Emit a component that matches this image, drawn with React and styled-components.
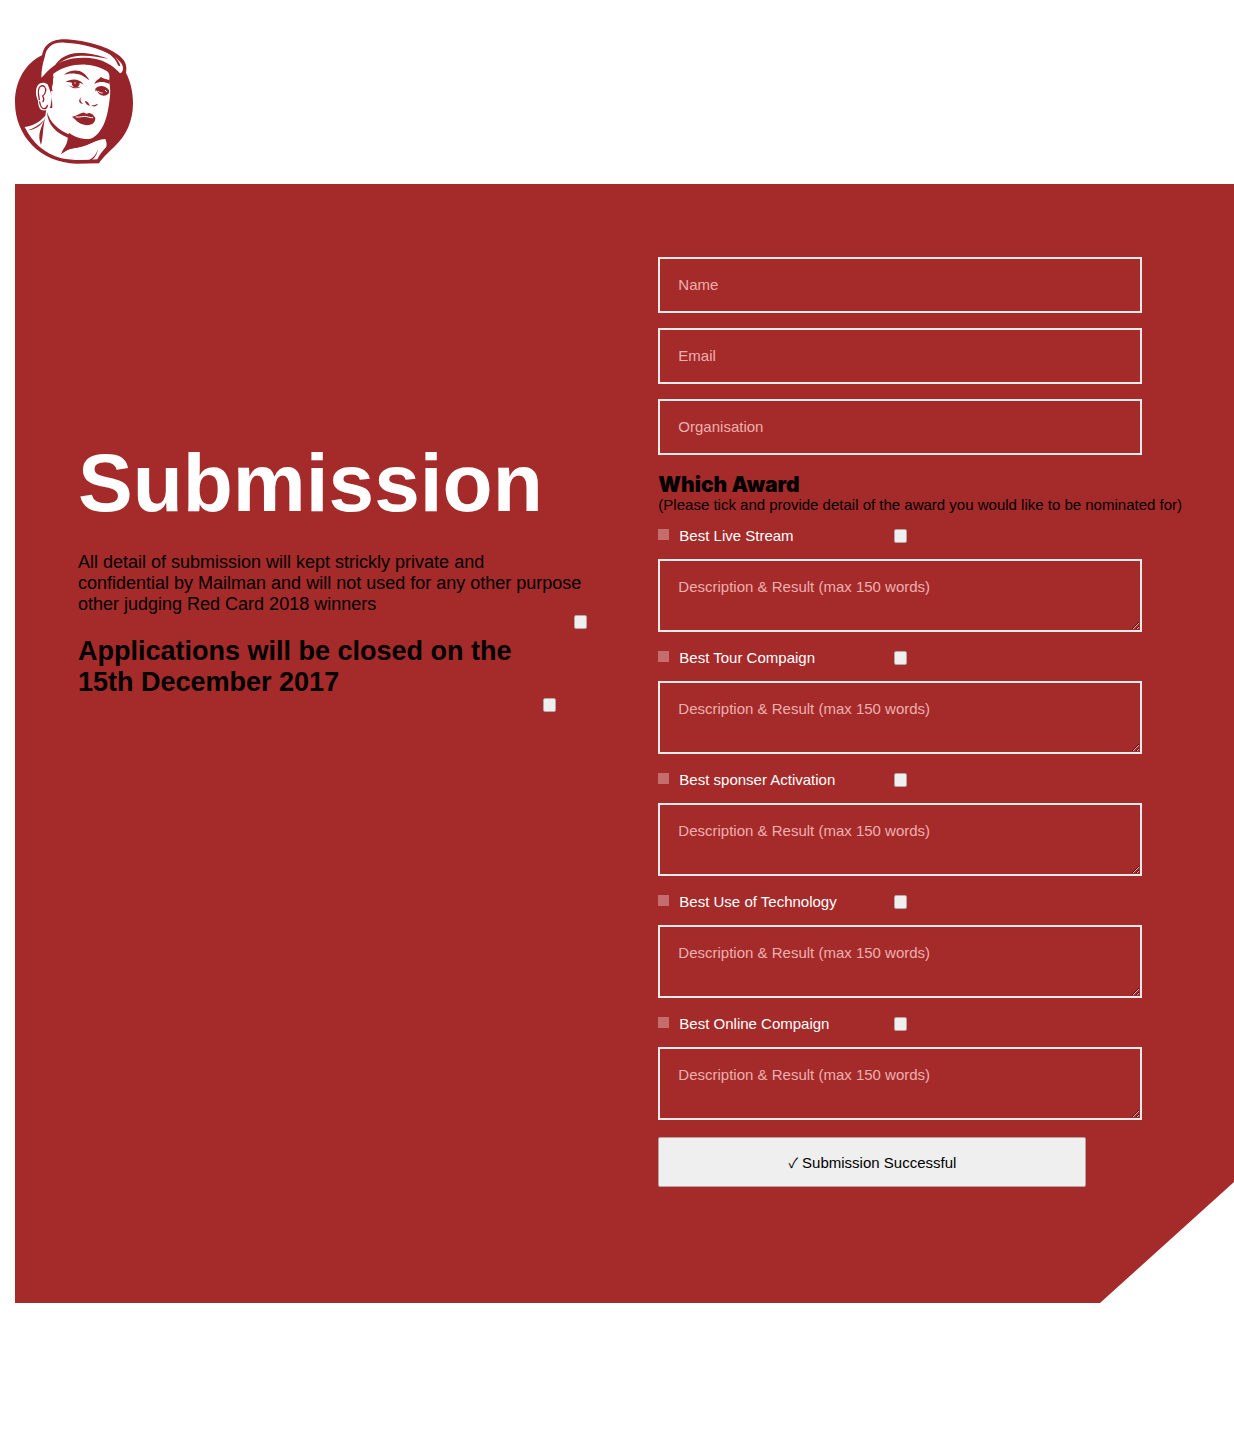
import React, { useId } from 'react';
import styled, { createGlobalStyle } from 'styled-components';

const RED = '#a52a2a';
const LOGO_RED = '#98242b';

const GlobalStyle = createGlobalStyle`
  *, *::before, *::after { box-sizing: border-box; }
  body {
    margin: 0;
    background: #fff;
    color: #000;
    font-family: "Liberation Sans", Arial, sans-serif;
    font-size: 15px;
    line-height: 18px;
  }
`;

const Page = styled.div`
  padding: 38px 0 144px 15px;
`;

const Header = styled.header`
  padding-bottom: 20px;
`;

const LogoLink = styled.a`
  display: block;
  width: 118px;
  height: 126px;
`;

const Panel = styled.main`
  display: grid;
  grid-template-columns: minmax(0, 6fr) minmax(0, 5fr);
  padding: 73px 92px 116px 63px;
  background: ${RED};
  clip-path: polygon(0 0, 100% 0, 100% calc(100% - 121px), calc(100% - 134px) 100%, 0 100%);
`;

const Intro = styled.section`
  padding-top: 180px;
`;

const Title = styled.h1`
  margin: 0 0 23px;
  color: #fff;
  font-size: 82px;
  line-height: 92px;
`;

const Text = styled.p`
  margin: 0;
  font-size: 18px;
  line-height: 21px;
`;

const Deadline = styled.h2`
  margin: 0;
  font-size: 27px;
  line-height: 31px;
`;

const Confirm = styled.div`
  display: flex;
  justify-content: flex-end;
  width: ${(p) => p.$width}px;
  max-width: 100%;
  margin-bottom: 7px;
`;

const Tick = styled.input.attrs({ type: 'checkbox' })`
  appearance: none;
  flex: none;
  width: 13px;
  height: 14px;
  margin: 0;
  border: 1px solid #b9a3a3;
  border-radius: 2px;
  background: #efefef;
  &:checked { background: #5b1414; }
`;

const Form = styled.form`
  display: flex;
  flex-direction: column;
`;

const fieldStyle = `
  display: block;
  width: 100%;
  border: 2px solid #fbeaea;
  border-radius: 0;
  background: transparent;
  color: #fff;
  font: inherit;
  outline: none;
  &::placeholder { color: #edb0ae; opacity: 1; }
`;

const TextField = styled.input`
  ${fieldStyle}
  height: 56px;
  margin-bottom: 15px;
  padding: 0 18px 2px;
`;

const Description = styled.textarea`
  ${fieldStyle}
  height: 73px;
  padding: 17px 18px;
  resize: both;
`;

const AwardHeading = styled.h3`
  margin: 4px 0 0;
  font-family: Inter, "Liberation Sans", sans-serif;
  font-size: 21px;
  font-weight: 900;
  line-height: 22px;
`;

const Note = styled.p`
  margin: 0;
  line-height: 18px;
  white-space: nowrap;
`;

const Awards = styled.ul`
  margin: -4px 0 17px;
  padding: 0;
  list-style: none;
`;

const AwardRow = styled.div`
  display: flex;
  align-items: center;
  height: 49px;
  padding-top: 2px;
`;

const AwardLabel = styled.label`
  display: flex;
  align-items: center;
  gap: 10px;
  width: 236px;
  color: #fff;
  &::before {
    content: "";
    width: 11px;
    height: 11px;
    margin-bottom: 3px;
    background: #c56c6c;
  }
`;

const Submit = styled.button`
  width: 428px;
  max-width: 100%;
  height: 50px;
  border: 1px solid #b9a3a3;
  border-radius: 2px;
  background: #efefef;
  color: #000;
  font: inherit;
`;

const CheckMark = styled.span`
  font-family: "Noto Sans CJK SC", sans-serif;
  font-size: 14px;
`;

const AWARDS = [
  'Best Live Stream',
  'Best Tour Compaign',
  'Best sponser Activation',
  'Best Use of Technology',
  'Best Online Compaign',
];

function Logo() {
  return (
    <svg viewBox="45 24 354 378" width="118" height="126" aria-hidden="true">
      {/* disc and cap silhouette */}
      <path
        fill={LOGO_RED}
        d="M126 76C78 98 45 152 45 217c0 100 76 182 185 184l67-1c8-14 27-32 46-50 36-32 56-78 56-130 0-36-8-66-21-92 4-22-2-38-26-55-35-25-92-41-152-45-26-2-46 5-58 16-10 9-14 20-16 32z"
      />
      <g fill="#fff">
        {/* cap */}
        <path d="M134 82c2-14 6-24 15-32 11-10 26-14 46-12 52 3 104 16 140 38 22 13 35 27 34 40 0 7-4 12-9 14-20-24-52-42-90-46-52-5-98 8-129 41-5 6-11 12-17 18 0-22 4-42 10-61z" />
        {/* face */}
        <path d="M160 131c30-20 62-29 98-27 30 2 54 12 66 22 6 8 5 18 3 27 4 18 5 34 2 54-4 34-10 66-24 88-12 19-24 33-46 33-24-2-50-13-72-36-17-16-29-32-34-49l4-13c0-20-4-38-4-50 4-10 8-22 5-36z" />
        {/* ear */}
        <path d="M143 163c-10-8-25-6-31 5-7 14-4 32 2 44 0 14 4 26 14 29 10 2 19-3 24-13l4-30z" />
        {/* neck, shoulder */}
        <path d="M74 291c24-4 44-14 62-34l4-26 26 6 44 60-6 22c-1 16-5 28-16 42l-4 11c12-10 25-17 40-18 35-4 56-24 92-27 3 8 5 14 3 23-10 12-21 24-27 38-36 3-75 4-108-3-50-14-86-46-110-94z" />
      </g>
      <g fill={LOGO_RED}>
        {/* cap folds */}
        <path d="M163 110c14-26 40-40 72-41 34-1 62 7 90 17-30-5-60-11-92-8-28 3-48 15-70 32z" />
        <path d="M308 61c24 8 46 22 53 46-3 2-5 1-7-1-8-20-22-34-46-45z" />
        {/* eyebrows */}
        <path d="M192 134c18-15 44-16 58-5 8 6 14 14 18 22-16-13-28-19-42-20-12-1-22 1-34 3z" />
        <path d="M283 162c4-12 16-16 20-22 4 6 16 6 24 10l1 12c-16-7-30-8-45 0z" />
        {/* eyes */}
        <path d="M196 157c12-9 28-11 42-5 6 3 10 7 13 13-6-4-9-6-12-6 0 8-5 13-12 13-8 0-12-6-11-14-8-2-13-2-20-1z" />
        <path d="M205 164c14 9 28 10 40 5-12 9-28 8-40-5z" />
        <path d="M286 176c9-11 28-12 41 4v9c-3 5-9 8-16 8-10 0-17-6-19-14-2-2-4-2-6 2z" />
        {/* nose */}
        <path d="M244 200c-4 8-4 15 6 21-10 1-14-6-12-12zM255 213c6 0 11 5 15 14-8-1-14-6-15-14zM273 225c8 3 14-2 21-4-4 9-15 11-21 4z" />
        {/* lips */}
        <path d="M216 260c12-2 24-11 32-12 6-1 8 4 13 3 8-4 14 0 19 5l6 8c0 8-3 14-9 18-10 5-22 4-33 0-10-4-16-12-28-22z" />
        {/* jaw line and shadow under the chin */}
        <path d="M141 246c10 32 34 54 68 68 16 8 32 13 48 14l48-2c-26 4-44 17-65 21-14 2-30 5-42 12 6-12 8-24 6-36-35-13-62-40-63-77z" />
        {/* collar */}
        <path d="M137 260c-9 24-6 54-14 85-8-22-5-36 0-50 4-12 8-22 14-35zM84 301c18-6 34-16 48-31-10 18-26 29-48 31zM182 373c16-22 34-29 60-34 22-4 38-8 56-13-26 16-44 23-70 27-20 3-32 9-46 20z" />
        <path d="M268 390c14-8 22-20 26-34-2 14-8 26-18 34z" />
      </g>
      <g fill="none" stroke={LOGO_RED} strokeWidth="4" strokeLinecap="round">
        <path d="M118 209c-4-18-6-36 5-41 9-3 15 5 14 15-1 8-5 12-9 15 5 8 4 12 1 17" />
        <path d="M119 216c2 12 5 20 13 20 6 0 9-4 10-10" />
      </g>
      {/* sideburn */}
      <path fill={LOGO_RED} d="M143 152l18-14c-2 16-8 30-3 46l-6-2c-1-10-4-20-9-30z" />
      <g fill="none" stroke="#fff" strokeLinecap="round">
        <path strokeWidth="3" d="M228 261c14 2 22-4 32-1 8 2 12 3 18 3" />
        <path strokeWidth="3" d="M295 184c4 4 8 5 12 5M316 181l4 4" />
      </g>
      <circle cx="225" cy="159" r="2" fill="#fff" />
    </svg>
  );
}

function Award({ name }) {
  const id = useId();
  return (
    <li>
      <AwardRow>
        <AwardLabel htmlFor={id}>{name}</AwardLabel>
        <Tick id={id} />
      </AwardRow>
      <Description aria-label={`${name} description`} placeholder="Description & Result (max 150 words)" />
    </li>
  );
}

export default function App() {
  return (
    <Page>
      <GlobalStyle />
      <Header>
        <LogoLink href="#" aria-label="Home"><Logo /></LogoLink>
      </Header>
      <Panel>
        <Intro>
          <Title>Submission</Title>
          <Text>
            All detail of submission will kept strickly private and<br />
            confidential by Mailman and will not used for any other purpose<br />
            other judging Red Card 2018 winners
          </Text>
          <Confirm $width={509}><Tick aria-label="Accept privacy terms" /></Confirm>
          <Deadline>
            Applications will be closed on the<br />
            15th December 2017
          </Deadline>
          <Confirm $width={478}><Tick aria-label="Accept closing date" /></Confirm>
        </Intro>
        <Form onSubmit={(e) => e.preventDefault()}>
          <TextField type="text" aria-label="Name" placeholder="Name" />
          <TextField type="email" aria-label="Email" placeholder="Email" />
          <TextField type="text" aria-label="Organisation" placeholder="Organisation" />
          <AwardHeading>Which Award</AwardHeading>
          <Note>(Please tick and provide detail of the award you would like to be nominated for)</Note>
          <Awards>
            {AWARDS.map((name) => <Award key={name} name={name} />)}
          </Awards>
          <Submit type="submit"><CheckMark>✓</CheckMark> Submission Successful</Submit>
        </Form>
      </Panel>
    </Page>
  );
}
